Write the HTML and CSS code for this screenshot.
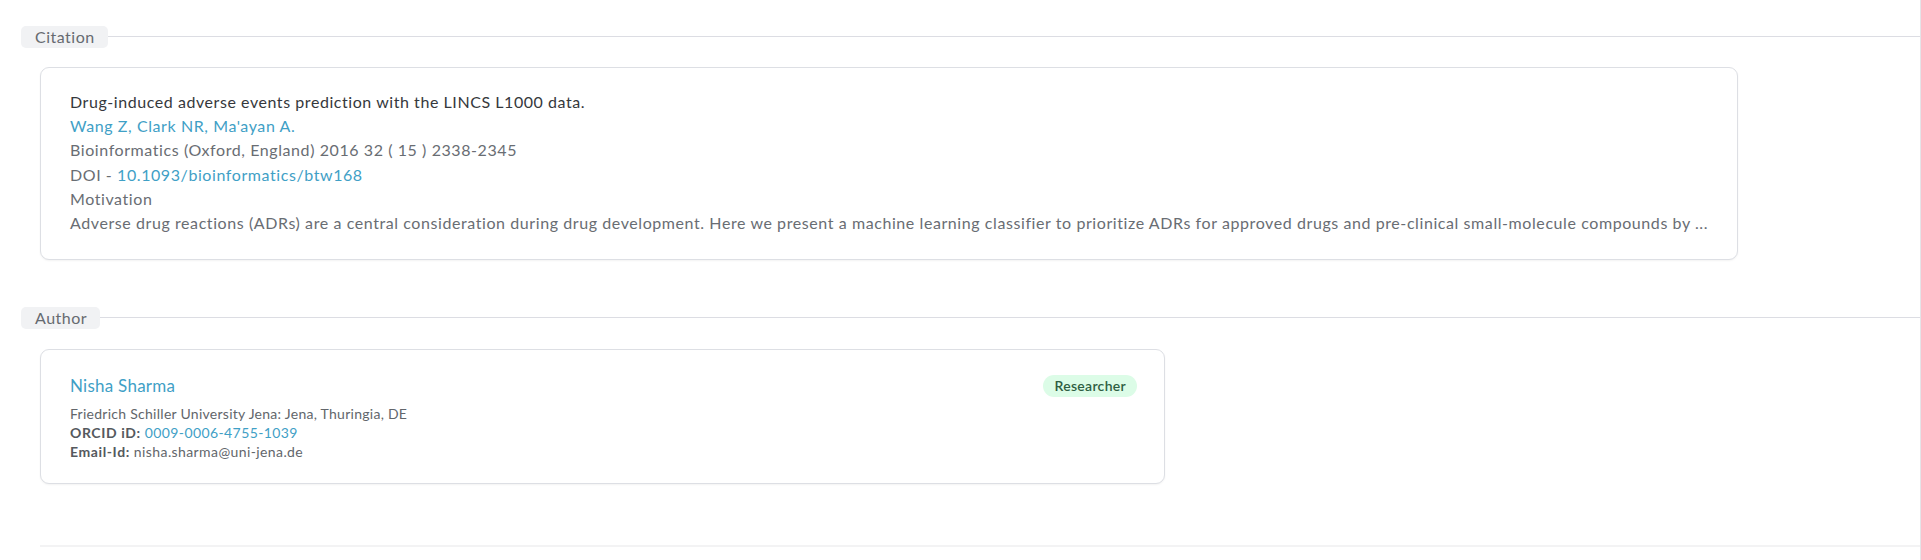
FILE: index.html
```html
<!DOCTYPE html>
<html lang="en">
<head>
<meta charset="utf-8">
<title>Citation</title>
<link rel="stylesheet" href="styles.css">
</head>
<body>
<main class="page">
  <section class="section section-citation">
    <div class="section-head">
      <span class="section-label">Citation</span>
      <span class="section-rule"></span>
    </div>
    <div class="section-body">
      <article class="card citation-card">
        <div class="cit-title">Drug-induced adverse events prediction with the LINCS L1000 data.</div>
        <div class="cit-line"><a class="link" href="#">Wang Z, Clark NR, Ma'ayan A.</a></div>
        <div class="cit-line">Bioinformatics (Oxford, England) 2016 32 ( 15 ) 2338-2345</div>
        <div class="cit-line">DOI - <a class="link" href="#">10.1093/bioinformatics/btw168</a></div>
        <div class="cit-line">Motivation</div>
        <div class="cit-line cit-abstract">Adverse drug reactions (ADRs) are a central consideration during drug development. Here we present a machine learning classifier to prioritize ADRs for approved drugs and pre-clinical small-molecule compounds by ...</div>
      </article>
    </div>
  </section>

  <section class="section section-author">
    <div class="section-head">
      <span class="section-label">Author</span>
      <span class="section-rule"></span>
    </div>
    <div class="section-body">
      <article class="card author-card">
        <div class="author-info">
          <a class="author-name link" href="#">Nisha Sharma</a>
          <div class="author-meta">
            <div>Friedrich Schiller University Jena: Jena, Thuringia, DE</div>
            <div class="meta-row"><b>ORCID iD:</b> <a class="link" href="#">0009-0006-4755-1039</a></div>
            <div class="meta-row"><b>Email-Id:</b> nisha.sharma@uni-jena.de</div>
          </div>
        </div>
        <span class="badge">Researcher</span>
      </article>
    </div>
  </section>

  <div class="bottom-rule"></div>
</main>
</body>
</html>
```

FILE: styles.css
```css
* { box-sizing: border-box; }

html, body {
  margin: 0;
  padding: 0;
  background: #ffffff;
}

body {
  font-family: Lato, "Noto Sans", Arial, sans-serif;
  color: #696d73;
  width: 1921px;
  height: 560px;
  overflow: hidden;
  border-right: 1px solid #e4e4e8;
}

.page {
  padding: 26px 0 0 21px;
}

.link {
  color: #3fa0c6;
  text-decoration: none;
}

.section-head {
  display: flex;
  align-items: center;
}

.section-label {
  background: #f1f2f4;
  color: #666a70;
  font-size: 16px;
  letter-spacing: 0.5px;
  line-height: 22px;
  padding: 0 13px 0 14px;
  border-radius: 5px;
}

.section-rule {
  flex: 1;
  height: 1px;
  background: #dcdde3;
  margin-top: -2px;
}

.section-body {
  padding: 19px 0 0 19px;
}

.card {
  background: #fff;
  border: 1px solid #dddfe4;
  border-radius: 9px;
  box-shadow: 0 1px 2px rgba(0, 0, 0, 0.05);
}

.citation-card {
  width: 1698px;
  padding: 22px 20px 24px 29px;
  font-size: 16px;
  letter-spacing: 0.58px;
  line-height: 24.2px;
  white-space: nowrap;
}

.cit-title {
  color: #35383c;
  letter-spacing: 0.56px;
}

.section-author {
  margin-top: 47px;
}

.section-author .section-body {
  padding-top: 20px;
}

.author-card {
  width: 1125px;
  height: 135px;
  padding: 24px 27px 0 29px;
  display: flex;
  justify-content: space-between;
  align-items: flex-start;
}

.author-name {
  display: block;
  font-size: 17px;
  letter-spacing: 0.25px;
  line-height: 24px;
}

.author-meta {
  margin-top: 6px;
  font-size: 14px;
  letter-spacing: 0.27px;
  line-height: 19px;
  color: #62666b;
}

.meta-row {
  letter-spacing: 0.4px;
}

.author-meta b {
  color: #55595e;
  font-weight: 700;
  letter-spacing: 0.6px;
}

.badge {
  margin-top: 1px;
  background: #dcfce7;
  color: #2e5e42;
  font-size: 14px;
  font-weight: 600;
  letter-spacing: 0.3px;
  line-height: 22px;
  padding: 0 11px;
  border-radius: 11px;
}

.bottom-rule {
  margin: 61px 0 0 19px;
  height: 2px;
  background: #f3f3f4;
}
```
